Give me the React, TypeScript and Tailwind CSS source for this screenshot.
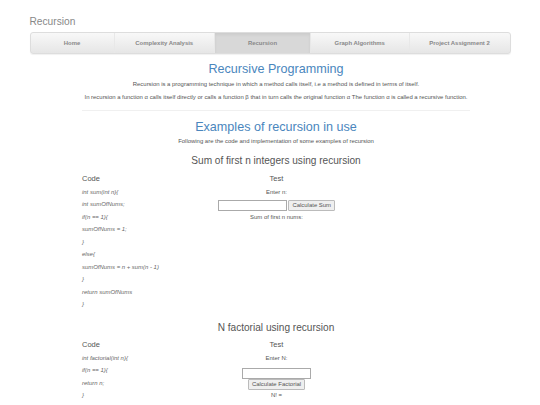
import * as React from 'react';

const tabs = [
    { label: "Home", width: "w-[84px]" },
    { label: "Complexity Analysis", width: "w-[100.5px]" },
    { label: "Recursion", width: "w-[96px]", active: true },
    { label: "Graph Algorithms", width: "w-[98.5px]" },
    { label: "Project Assignment 2", width: "flex-1" },
];

const sumCode = [
    "int sum(int n){",
    "int sumOfNums;",
    "if(n == 1){",
    "sumOfNums = 1;",
    "}",
    "else{",
    "sumOfNums = n + sum(n - 1)",
    "}",
    "return sumOfNums",
    "}",
];

const factorialCode = [
    "int factorial(int n){",
    "if(n == 1){",
    "return n;",
    "}",
];

function CodeColumn({ lines }: { lines: string[] }) {
    return (
        <div className="w-[130px]">
            <p className="text-[7.5px] leading-[10px] text-[#555] mb-[5px]">Code</p>
            {lines.map((line, index) => (
                <p key={index} className="text-[5.95px] leading-[7.5px] mb-[5px] italic text-[#666]">{line}</p>
            ))}
        </div>
    );
}

export default function App() {
    return (
        <div className="w-[540px] h-[405px] overflow-hidden bg-white opacity-[0.999] font-['Liberation_Sans',Arial,sans-serif] text-[#555]">
            <div className="pl-[29.5px] pr-[29.5px] pt-[16px]">
                <p className="text-[10.2px] leading-[12px] text-[#888] mb-[4px]">Recursion</p>

                <div className="flex h-[22px] rounded-[3px] border border-[#ddd] bg-gradient-to-b from-[#f8f8f8] to-[#e6e6e6] shadow-[0_1px_1px_rgba(0,0,0,0.06)] overflow-hidden">
                    {tabs.map((tab) => (
                        <div
                            key={tab.label}
                            className={`${tab.width} flex items-center justify-center border-r border-[#e8e8e8] last:border-r-0 text-[5.95px] font-bold text-[#888] ${tab.active ? 'bg-[#d8d8d8] shadow-[inset_0_2px_3px_rgba(0,0,0,0.06)]' : ''}`}
                        >
                            {tab.label}
                        </div>
                    ))}
                </div>
            </div>

            <div className="w-[388px] ml-[82px] mt-[6px]">
                <div className="text-center">
                    <h2 className="text-[12.6px] leading-[18px] text-[#4a86bd]">Recursive Programming</h2>
                    <p className="text-[5.95px] leading-[7.5px] mt-[3px]">Recursion is a programming technique in which a method calls itself, i.e a method is defined in terms of itself.</p>
                    <p className="text-[5.95px] leading-[7.5px] mt-[5px] whitespace-nowrap -mx-[20px]">In recursion a function α calls itself directly or calls a function β that in turn calls the original function α The function α is called a recursive function.</p>
                </div>

                <hr className="border-[#f0f0f0] mt-[9px]" />

                <div className="text-center mt-[7px]">
                    <h2 className="text-[12.6px] leading-[18px] text-[#4a86bd]">Examples of recursion in use</h2>
                    <p className="text-[5.95px] leading-[7.5px] mt-[2px]">Following are the code and implementation of some examples of recursion</p>
                    <h3 className="text-[10.1px] leading-[12px] mt-[9px]">Sum of first n integers using recursion</h3>
                </div>

                <div className="flex mt-[7px]">
                    <CodeColumn lines={sumCode} />
                    <div className="w-[129px] text-center">
                        <p className="text-[7.5px] leading-[10px] mb-[5px]">Test</p>
                        <p className="text-[5.95px] leading-[7.5px] mb-[4px]">Enter n:</p>
                        <div className="flex justify-center gap-[1.5px] -mx-[20px]">
                            <input className="w-[69px] h-[11px] border border-[#aaa] bg-white" />
                            <button className="h-[11px] px-[3px] text-[5.95px] text-[#555] border border-[#bbb] bg-[#efefef] rounded-[1px]">Calculate Sum</button>
                        </div>
                        <p className="text-[5.95px] leading-[7.5px] mt-[3px]">Sum of first n nums:</p>
                    </div>
                </div>

                <h3 className="text-[10.1px] leading-[12px] text-center mt-[8px]">N factorial using recursion</h3>

                <div className="flex mt-[6px]">
                    <CodeColumn lines={factorialCode} />
                    <div className="w-[129px] text-center">
                        <p className="text-[7.5px] leading-[10px] mb-[5px]">Test</p>
                        <p className="text-[5.95px] leading-[7.5px] mb-[6px]">Enter N:</p>
                        <div className="flex flex-col items-center">
                            <input className="w-[69px] h-[11px] border border-[#aaa] bg-white" />
                            <button className="h-[11px] px-[3px] text-[5.95px] text-[#555] border border-[#bbb] bg-[#efefef] rounded-[1px]">Calculate Factorial</button>
                        </div>
                        <p className="text-[6px] leading-[8px] mt-[1px]">N! =</p>
                    </div>
                </div>
            </div>
        </div>
    );
}
